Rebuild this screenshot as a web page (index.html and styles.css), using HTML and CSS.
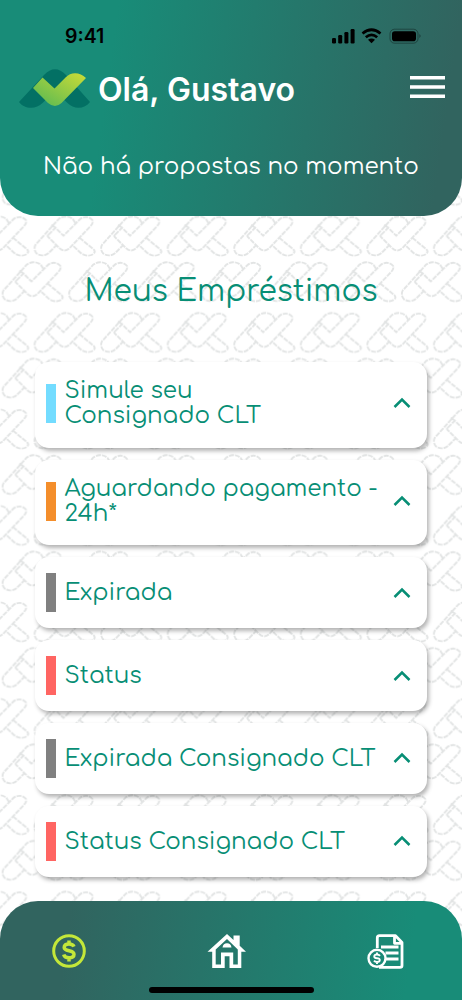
FILE: index.html
```html
<!DOCTYPE html>
<html lang="pt-BR">
<head>
<meta charset="utf-8">
<title>Meus Empréstimos</title>
<link rel="stylesheet" href="styles.css">
</head>
<body>
<div class="app">
  <svg class="wallpaper" width="462" height="1000" aria-hidden="true">
    <defs>
      <g id="mark" fill="none" stroke="#e2e4e4" stroke-width="1.900" stroke-linejoin="round" stroke-dasharray="5 1">
        <path d="M15 19.500 22 12.500 30 20.500 46 4.500C50 .8 56 1 59 5 60 8 58 10 56 12L36 33C33 36 29 36 26 33L15 22Q13.500 21 15 19.500Z"/>
        <path d="M22 12.500 17.500 9.500M42 8 39.500 4C36 .5 30 .5 25.500 3.500L2 29.500C.5 32 1 36 3 38 7 41.500 13 40.500 16 37L23 30M46 22.500 60 34C62 36 61.500 37.500 59.500 39 55.500 41.500 50 40.500 46.500 37L39 30"/>
      </g>
      <pattern id="tile" width="66.55" height="96.45" patternUnits="userSpaceOnUse" patternTransform="translate(33.5 118.8)">
        <use href="#mark"/>
        <use href="#mark" x="34.500" y="45.700"/>
        <use href="#mark" x="-32.050" y="45.700"/>
      </pattern>
    </defs>
    <rect width="462" height="1000" fill="url(#tile)"/>
  </svg>

  <header class="header">
    <div class="statusbar">
      <span class="time">9:41</span>
      <svg class="signals" width="92" height="18" viewBox="0 0 92 18">
        <rect x="1" y="11" width="4" height="5.500" rx="1.200"/>
        <rect x="7.200" y="8" width="4" height="8.500" rx="1.200"/>
        <rect x="13.400" y="5" width="4" height="11.500" rx="1.200"/>
        <rect x="19.600" y="2" width="4" height="14.500" rx="1.200"/>
        <path d="M31.500 6.500Q40.500 -1 49.500 6.500M34.800 10.300Q40.500 5.500 46.200 10.300" fill="none" stroke="#000" stroke-width="2.700"/>
        <path d="M37 12.800Q40.500 10 44 12.800L40.500 16.300Z"/>
        <rect x="59" y="2.200" width="28" height="14" rx="4.500" fill="none" stroke="#000" stroke-opacity=".35"/>
        <rect x="61" y="4.200" width="24" height="10" rx="2.800"/>
        <path d="M88.500 7q2 2 0 4z" opacity=".5"/>
      </svg>
    </div>
    <div class="topline">
      <svg class="logo" width="73" height="40" viewBox="0 0 73 40">
        <defs><linearGradient id="lime" x1="0" y1="1" x2="1" y2="0"><stop offset=".15" stop-color="#65bd50"/><stop offset="1" stop-color="#cddc36"/></linearGradient></defs>
        <path fill="#037064" d="M1 33 26 6Q37-5.500 48 6L72 33C67 40 56 41 49.500 34L37 22 24.500 34C18 41 6 40 1 33Z"/>
        <path fill="url(#lime)" d="M15 19 24.500 8.500 36.500 19.500 47.500 8.500C53 2.500 62 3 68 9L43.500 34Q37 40 30 34Z"/>
      </svg>
      <h1 class="greeting">Olá, Gustavo</h1>
      <svg class="menu" width="35" height="22" viewBox="0 0 35 22"><path d="M0 1.800H35M0 11H35M0 20.200H35" stroke="#fff" stroke-width="3.400"/></svg>
    </div>
    <p class="notice">Não há propostas no momento</p>
  </header>

  <main class="content">
    <h2 class="title">Meus Empréstimos</h2>
    <ul class="cards">
      <li class="card tall"><i class="bar blue"></i><span class="label">Simule seu<br>Consignado CLT</span><svg class="chevron" viewBox="0 0 18 12"><path d="M1.500 10 9 2.500 16.500 10"/></svg></li>
      <li class="card tall"><i class="bar orange"></i><span class="label">Aguardando pagamento -<br>24h*</span><svg class="chevron" viewBox="0 0 18 12"><path d="M1.500 10 9 2.500 16.500 10"/></svg></li>
      <li class="card"><i class="bar gray"></i><span class="label">Expirada</span><svg class="chevron" viewBox="0 0 18 12"><path d="M1.500 10 9 2.500 16.500 10"/></svg></li>
      <li class="card"><i class="bar red"></i><span class="label">Status</span><svg class="chevron" viewBox="0 0 18 12"><path d="M1.500 10 9 2.500 16.500 10"/></svg></li>
      <li class="card"><i class="bar gray"></i><span class="label">Expirada Consignado CLT</span><svg class="chevron" viewBox="0 0 18 12"><path d="M1.500 10 9 2.500 16.500 10"/></svg></li>
      <li class="card"><i class="bar red"></i><span class="label">Status Consignado CLT</span><svg class="chevron" viewBox="0 0 18 12"><path d="M1.500 10 9 2.500 16.500 10"/></svg></li>
    </ul>
  </main>

  <nav class="tabs">
    <div class="tabrow">
      <svg width="34" height="34" viewBox="0 0 34 34" fill="none" stroke="#c4e739">
        <circle cx="17" cy="17" r="15.300" stroke-width="3"/>
        <path d="M22 12.700C21 10.300 19.300 10 17 10 14 10 12.200 11.300 12.200 13.400 12.200 18 22 15.500 22 20.300 22 22.700 19.800 23.800 17 23.800 14 23.800 12.300 22.700 11.700 20.500M17 6.500V10M17 24V27.500" stroke-width="3.500"/>
      </svg>
      <svg width="40" height="34" viewBox="0 0 40 34">
        <path fill="#fff" fill-rule="evenodd" d="M20 0 26.500 6V1.500H32.700V11.700L39 17.700H34.300V34H22.500V22.200H17.700V34H5.200V17.700H.5ZM20 5 8.700 15.500V30.500H14V18.500H26.200V30.500H30.800V15.500Z"/>
        <path fill="#fff" d="M15.500 13.500Q16.200 9.300 20 9.300T24.500 13.500Z"/>
      </svg>
      <svg width="37" height="35" viewBox="0 0 37 35" fill="none" stroke="#fff">
        <path d="M10.300 14V4Q10.300 1.700 12.500 1.700H28.500L35 8.500V31.500Q35 33.300 33 33.300H12M27.500 2V9.300H34.500M14 13H31.500M18.500 19H31.500M19 25H31.500" stroke-width="2.800" stroke-linejoin="round"/>
        <circle cx="10" cy="24.300" r="8.500" stroke-width="2.400"/>
        <path d="M13 21.800Q12 20.500 10 20.500C6.200 20.500 6.500 24.200 10 24.200 13.800 24.200 13.700 28 10 28Q8 28 7 26.700M10 18.500V20.500M10 28V30" stroke-width="1.900"/>
      </svg>
    </div>
    <div class="home-indicator"></div>
  </nav>
</div>
</body>
</html>
```
FILE: styles.css
```css
* { box-sizing: border-box; margin: 0; padding: 0; }
body { background: #fff; font-family: Comfortaa, Inter, "Open Sans", sans-serif; }
svg { display: block; flex: none; }
.app { position: relative; width: 462px; height: 1000px; display: flex; flex-direction: column; overflow: hidden; isolation: isolate; }
.wallpaper { position: absolute; top: 0; left: 0; z-index: -1; }

.header { height: 216px; border-radius: 0 0 38px 38px; background: linear-gradient(98deg, #188c78 24%, #31645f 94%); padding-top: 24px; flex: none; }
.statusbar { display: flex; justify-content: space-between; align-items: center; height: 24px; padding: 0 39px 0 65px; }
.time { font-family: Inter, sans-serif; font-size: 19.5px; font-weight: 600; line-height: 24px; }
.signals { margin-top: -1px; }
.topline { display: flex; align-items: center; height: 40px; margin-top: 21px; padding: 0 17px 0 18px; }
.greeting { flex: 1; margin-left: 7px; padding-top: 1px; color: #fff; font-family: Inter, sans-serif; font-size: 32px; font-weight: 600; line-height: 40px; white-space: nowrap; }
.menu { margin-top: -4px; }
.notice { margin-top: 43px; text-align: center; color: #fff; font-size: 23px; line-height: 30px; white-space: nowrap; }

.content { flex: 1; padding: 56px 35px 0; }
.title { height: 40px; margin-bottom: 50px; text-align: center; color: #078e75; font-size: 29.7px; font-weight: 400; line-height: 40px; white-space: nowrap; }
.cards { list-style: none; display: flex; flex-direction: column; gap: 12px; }
.card { display: flex; align-items: center; height: 70.8px; padding: 0 16px 0 11px; border-radius: 14px; background: #fff; box-shadow: 2px 3px 4px rgba(0, 0, 0, 0.3); }
.card.tall { height: 85.7px; padding-bottom: 3px; }
.bar { width: 10px; height: 39px; flex: none; }
.blue { background: #73dcff; }
.orange { background: #f48e2b; }
.gray { background: #808080; }
.red { background: #ff6562; }
.label { flex: 1; margin-left: 8.5px; color: #078e75; font-size: 23px; line-height: 25px; white-space: nowrap; }
.chevron { width: 18px; height: 12px; fill: none; stroke: #078e75; stroke-width: 2.5; }

.tabs { height: 99px; flex: none; border-radius: 38px 38px 0 0; background: linear-gradient(98deg, #31645f 15%, #188c78 88%); padding-top: 33px; }
.tabrow { display: flex; justify-content: space-between; height: 35px; padding: 0 58px 0 52px; }
.home-indicator { width: 165px; height: 6px; margin: 18px auto 0; border-radius: 3px; background: #000; }
```
